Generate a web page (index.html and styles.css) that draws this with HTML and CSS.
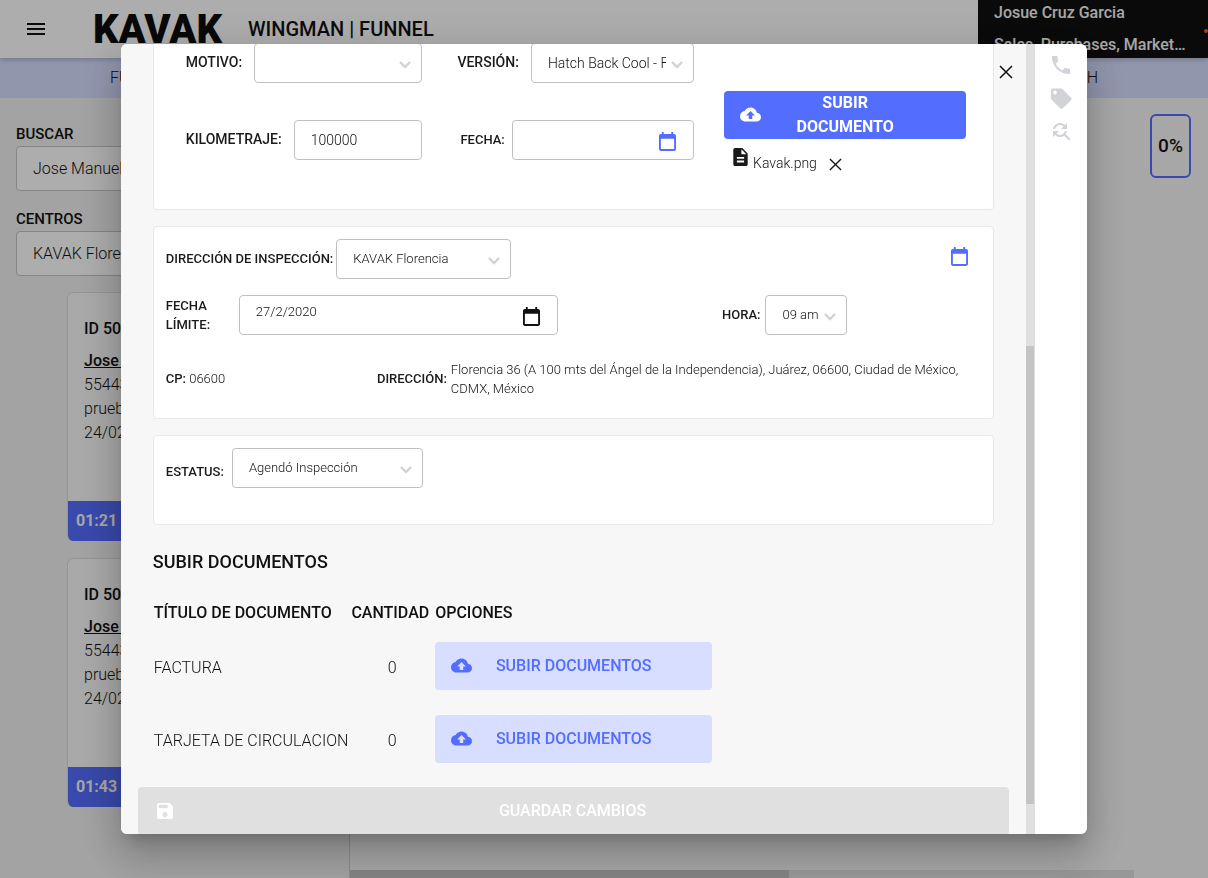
FILE: index.html
```html
<!DOCTYPE html>
<html lang="es">
<head>
<meta charset="utf-8">
<meta name="viewport" content="width=device-width, initial-scale=1">
<title>Wingman | Funnel</title>
<link rel="stylesheet" href="styles.css">
</head>
<body>
<svg class="sprite" aria-hidden="true">
  <symbol id="chevron" viewBox="0 0 12 8"><path d="M1 1l5 5 5-5" fill="none" stroke="currentColor" stroke-width="2.4"/></symbol>
  <symbol id="cross" viewBox="0 0 14 14"><path d="M1 1l12 12M13 1L1 13" fill="none" stroke="currentColor" stroke-width="1.5"/></symbol>
  <symbol id="calendar" viewBox="3 1 18 20"><path d="M19 3h-1V1h-2v2H8V1H6v2H5c-1.11 0-1.99.9-1.99 2L3 19c0 1.1.89 2 2 2h14c1.1 0 2-.9 2-2V5c0-1.1-.9-2-2-2zm0 16H5V8h14v11z" fill="currentColor"/></symbol>
  <symbol id="cloud" viewBox="0 0 24 24"><path d="M19.35 10.04C18.67 6.59 15.64 4 12 4 9.11 4 6.6 5.64 5.35 8.04 2.34 8.36 0 10.91 0 14c0 3.31 2.69 6 6 6h13c2.76 0 5-2.24 5-5 0-2.64-2.05-4.78-4.65-4.96zM14 13v4h-4v-4H7l5-5 5 5h-3z" fill="currentColor"/></symbol>
  <symbol id="file" viewBox="4 2 16 20"><path d="M14 2H6c-1.1 0-1.99.9-1.99 2L4 20c0 1.1.89 2 1.99 2H18c1.1 0 2-.9 2-2V8l-6-6zm2 16H8v-2h8v2zm0-4H8v-2h8v2zm-3-5V3.5L18.5 9H13z" fill="currentColor"/></symbol>
  <symbol id="phone" viewBox="0 0 24 24"><path d="M6.62 10.79c1.44 2.83 3.76 5.14 6.59 6.59l2.2-2.2c.27-.27.67-.36 1.02-.24 1.12.37 2.33.57 3.57.57.55 0 1 .45 1 1V20c0 .55-.45 1-1 1-9.39 0-17-7.61-17-17 0-.55.45-1 1-1h3.5c.55 0 1 .45 1 1 0 1.25.2 2.45.57 3.57.11.35.03.74-.25 1.02l-2.2 2.2z" fill="currentColor"/></symbol>
  <symbol id="tag" viewBox="0 0 24 24"><path d="M21.9 11.6l-8.6-8.6c-.4-.4-.9-.6-1.4-.6H4c-1.1 0-2.1.9-2.1 2v7.8c0 .5.2 1 .6 1.4l8.6 8.6c.8.8 2 .8 2.8 0l8-8c.8-.8.8-1.9 0-2.6zM6 8.4a1.9 1.9 0 1 1 0-3.8 1.9 1.9 0 0 1 0 3.8z" fill="currentColor"/></symbol>
  <symbol id="find" viewBox="0 0 24 24"><path d="M11 6c1.38 0 2.63.56 3.54 1.46L12 10h6V4l-2.05 2.05C14.68 4.78 12.93 4 11 4c-3.53 0-6.43 2.61-6.92 6H6.1c.46-2.28 2.48-4 4.9-4zm5.64 9.14c.66-.9 1.12-1.97 1.28-3.14H15.9c-.46 2.28-2.48 4-4.9 4-1.38 0-2.63-.56-3.54-1.46L10 12H4v6l2.05-2.05C7.32 17.22 9.07 18 11 18c1.55 0 2.98-.51 4.14-1.36L20 21.49 21.49 20l-4.85-4.86z" fill="currentColor"/></symbol>
  <symbol id="save" viewBox="3 3 18 18"><path d="M17 3H5c-1.11 0-2 .9-2 2v14c0 1.1.89 2 2 2h14c1.1 0 2-.9 2-2V7l-4-4zm-5 16c-1.66 0-3-1.34-3-3s1.34-3 3-3 3 1.34 3 3-1.34 3-3 3zm3-10H5V5h10v4z" fill="currentColor"/></symbol>
</svg>

<div class="page">
  <header class="topbar">
    <button class="menu" type="button" aria-label="Menú"><span></span><span></span><span></span></button>
    <svg class="logo" width="130" height="44" role="img" aria-label="Kavak"><text x="0" y="31">KAVAK</text></svg>
    <h1 class="brand">WINGMAN | FUNNEL</h1>
    <div class="user"><span>Josue Cruz Garcia</span><span>Sales, Purchases, Market…</span><i class="dot"></i></div>
  </header>
  <nav class="tabs"><a href="#funnel">FUNNEL</a><a href="#search">SEARCH</a></nav>
  <div class="columns">
    <aside class="sidebar">
      <label class="side-label" for="buscar">BUSCAR</label>
      <input class="side-input" id="buscar" type="text" value="Jose Manuel">
      <label class="side-label" for="centros">CENTROS</label>
      <select class="side-input" id="centros"><option>KAVAK Florencia</option></select>
      <article class="lead">
        <div class="lead-body"><strong class="lead-id">ID 50</strong><a href="#lead1">Jose M</a><span>55443</span><span>prueba</span><span>24/02</span></div>
        <div class="lead-time">01:21</div>
      </article>
      <article class="lead">
        <div class="lead-body"><strong class="lead-id">ID 50</strong><a href="#lead2">Jose M</a><span>55443</span><span>prueba</span><span>24/02</span></div>
        <div class="lead-time">01:43</div>
      </article>
    </aside>
    <main class="board">
      <div class="percent">0%</div>
      <div class="hbar"><div class="hbar-thumb"></div></div>
    </main>
  </div>
</div>

<div class="backdrop">
  <section class="modal" role="dialog" aria-label="Inspección">
    <div class="pane">
      <div class="card car">
        <div class="car-fields">
          <div class="field"><label for="motivo">MOTIVO:</label><span class="pick"><select id="motivo"><option></option></select><svg class="chev"><use href="#chevron"/></svg></span></div>
          <div class="field"><label for="version">VERSIÓN:</label><span class="pick version"><select id="version"><option>Hatch Back Cool - Full</option></select><svg class="chev"><use href="#chevron"/></svg></span></div>
          <div class="field"><label for="km">KILOMETRAJE:</label><span class="pick"><input id="km" type="text" value="100000"></span></div>
          <div class="field date-field"><label for="fecha">FECHA:</label><span class="pick"><input id="fecha" type="text"><svg class="cal"><use href="#calendar"/></svg></span></div>
        </div>
        <div class="upload">
          <button class="btn solid" type="button"><svg class="cloud"><use href="#cloud"/></svg><span>SUBIR DOCUMENTO</span></button>
          <div class="file"><svg class="doc"><use href="#file"/></svg><span>Kavak.png</span><button class="remove" type="button" aria-label="Quitar"><svg><use href="#cross"/></svg></button></div>
        </div>
      </div>

      <div class="card inspection">
        <div class="place">
          <label for="lugar">DIRECCIÓN DE INSPECCIÓN:</label>
          <span class="pick"><select id="lugar"><option>KAVAK Florencia</option></select><svg class="chev"><use href="#chevron"/></svg></span>
          <button class="cal-btn" type="button" aria-label="Calendario"><svg class="cal-icon"><use href="#calendar"/></svg></button>
        </div>
        <div class="when">
          <label for="limite">FECHA LÍMITE:</label>
          <span class="pick limit"><input id="limite" type="text" value="27/2/2020"><svg class="cal dark"><use href="#calendar"/></svg></span>
          <div class="hour"><label for="hora">HORA:</label><span class="pick"><select id="hora"><option>09 am</option></select><svg class="chev"><use href="#chevron"/></svg></span></div>
        </div>
        <div class="address">
          <div><b>CP:</b> 06600</div>
          <div class="street"><b>DIRECCIÓN:</b><span>Florencia 36 (A 100 mts del Ángel de la Independencia), Juárez, 06600, Ciudad de México, CDMX, México</span></div>
        </div>
      </div>

      <div class="card status">
        <label for="estatus">ESTATUS:</label>
        <span class="pick"><select id="estatus"><option>Agendó Inspección</option></select><svg class="chev"><use href="#chevron"/></svg></span>
      </div>

      <h2 class="docs-title">SUBIR DOCUMENTOS</h2>
      <table class="docs">
        <thead><tr><th>TÍTULO DE DOCUMENTO</th><th>CANTIDAD</th><th>OPCIONES</th></tr></thead>
        <tbody>
          <tr><td>FACTURA</td><td class="num">0</td><td class="action"><button class="btn soft" type="button"><svg class="cloud"><use href="#cloud"/></svg><span>SUBIR DOCUMENTOS</span></button></td></tr>
          <tr><td>TARJETA DE CIRCULACION</td><td class="num">0</td><td class="action"><button class="btn soft" type="button"><svg class="cloud"><use href="#cloud"/></svg><span>SUBIR DOCUMENTOS</span></button></td></tr>
        </tbody>
      </table>
      <button class="btn save" type="button" disabled><svg class="disk"><use href="#save"/></svg><span>GUARDAR CAMBIOS</span></button>
      <button class="close" type="button" aria-label="Cerrar"><svg><use href="#cross"/></svg></button>
    </div>
    <div class="vbar"><div class="vbar-thumb"></div></div>
    <div class="tools">
      <button type="button" aria-label="Llamar"><svg><use href="#phone"/></svg></button>
      <button type="button" aria-label="Etiqueta"><svg><use href="#tag"/></svg></button>
      <button type="button" aria-label="Reasignar"><svg><use href="#find"/></svg></button>
    </div>
  </section>
</div>
</body>
</html>
```

FILE: styles.css
```css
* { box-sizing: border-box; }
body {
  margin: 0;
  font: 300 16px/24px Roboto, "Liberation Sans", sans-serif;
  color: #111;
  overflow: hidden;
}
button, input, select { font: inherit; color: inherit; margin: 0; }
button { border: 0; padding: 0; background: none; cursor: pointer; }
svg { display: block; }
.sprite { position: absolute; width: 0; height: 0; }

.page { display: flex; flex-direction: column; height: 100vh; background: #f7f7f7; }
.topbar {
  display: flex;
  align-items: center;
  flex: none;
  height: 58px;
  padding-left: 27px;
  background: #fff;
  box-shadow: 0 2px 5px rgba(0, 0, 0, .2);
  z-index: 1;
}
.menu { display: grid; gap: 3px; width: 18px; }
.menu span { height: 2px; background: #111; }
.logo { margin-left: 48px; overflow: visible; align-self: flex-start; margin-top: 12px; }
.logo text { font: 900 40px Roboto, "Liberation Sans", sans-serif; fill: #0c0c0c; }
.brand { margin: 0 0 0 25px; font-size: 20px; font-weight: 500; color: #111; }
.user {
  position: relative;
  display: flex;
  flex-direction: column;
  justify-content: center;
  gap: 8px;
  width: 230px;
  height: 58px;
  margin-left: auto;
  padding-left: 16px;
  background: #0f0f0f;
  color: #f7f7f7;
  font-weight: 500;
  white-space: nowrap;
}
.dot { position: absolute; right: 0; top: 29px; width: 4px; height: 4px; border-radius: 2px; background: #ff5722; }
.tabs {
  display: flex;
  justify-content: space-between;
  align-items: center;
  flex: none;
  height: 40px;
  padding: 0 110px;
  background: #d8deff;
}
.tabs a { color: #111; text-decoration: none; }
.columns { display: flex; flex: 1; min-height: 0; }
.sidebar {
  display: flex;
  flex-direction: column;
  width: 350px;
  padding: 24px 16px 0;
  border-right: 1px solid #d0d0d0;
  background: #f0f0f0;
}
.side-label { font-size: 15px; font-weight: 500; }
.side-input {
  appearance: none;
  flex: none;
  width: 100%;
  height: 45px;
  margin-bottom: 16px;
  padding: 0 16px;
  border: 1px solid #c4c4c4;
  border-radius: 4px;
  background: #fff;
}
.lead {
  display: flex;
  flex-direction: column;
  flex: none;
  height: 249px;
  margin: 0 0 17px 51px;
  border: 1px solid #dcdcdc;
  border-bottom: 0;
  border-radius: 6px;
  background: #fafafa;
  overflow: hidden;
}
.lead-body { display: flex; flex-direction: column; flex: 1; padding: 24px 16px; }
.lead-id { margin-bottom: 8px; font-weight: 500; }
.lead-body a { font-weight: 500; color: #111; }
.lead-time { padding: 8px; background: #536dfe; color: #f7f7f7; font-weight: 700; }
.board { display: flex; flex-direction: column; justify-content: space-between; flex: 1; padding-top: 16px; }
.percent {
  align-self: flex-end;
  width: 41px;
  height: 64px;
  margin-right: 17px;
  border: 2px solid #536dfe;
  border-radius: 6px;
  font-size: 19px;
  font-weight: 500;
  line-height: 60px;
  text-align: center;
}
.hbar { height: 8px; margin-right: 74px; background: #e0e0e0; }
.hbar-thumb { width: 56%; height: 8px; background: #c4c4c4; }

.backdrop {
  position: fixed;
  inset: 0;
  z-index: 2;
  display: flex;
  align-items: center;
  justify-content: center;
  background: rgba(0, 0, 0, .32);
}
.modal {
  display: flex;
  width: 80%;
  height: 90%;
  border-radius: 6px;
  background: #fff;
  overflow: hidden;
  box-shadow: 0 11px 15px -7px rgba(0, 0, 0, .2), 0 24px 38px 3px rgba(0, 0, 0, .14), 0 9px 46px 8px rgba(0, 0, 0, .12);
}
.pane { position: relative; flex: 1; min-width: 0; padding: 0 32px; background: #f7f7f7; overflow: hidden; }
.vbar { display: flex; flex: none; width: 9px; background: #e0e0e0; border-right: 1px solid #ddd; }
.vbar-thumb { align-self: flex-start; width: 8px; height: 58%; margin-top: 302px; background: #c4c4c4; }
.tools { display: flex; flex-direction: column; align-items: center; gap: 9px; width: 52px; padding-top: 9px; color: #d2d2d9; }
.tools svg { width: 24px; height: 24px; }
.close { position: absolute; top: 21px; right: 13px; color: #111; }
.close svg { width: 14px; height: 14px; }

.card { margin-bottom: 16px; border: 1px solid #e8e8e8; border-radius: 4px; background: #fff; }
.card label, .card b { font-size: 13px; line-height: 19px; font-weight: 500; color: #1a1a1a; }
.pick { position: relative; display: block; }
.pick input, .pick select {
  display: block;
  appearance: none;
  width: 100%;
  height: 40px;
  padding: 0 16px;
  border: 1px solid #c0c0c0;
  border-radius: 4px;
  background: #fff;
  font-size: 13px;
}
.chev { position: absolute; right: 11px; top: 18px; width: 12px; height: 8px; color: #d2d2d9; pointer-events: none; }
.cal { position: absolute; right: 18px; top: 12px; width: 17px; height: 19px; color: #536dfe; }
.dark { color: #111; }

.car { display: flex; gap: 30px; margin-top: -17px; padding: 15px 27px 42px 32px; }
.car-fields { display: grid; flex: 508; grid-template-columns: 1fr 1fr; align-content: start; gap: 37px 35px; }
.field { display: flex; align-items: center; gap: 12px; }
.field .pick { flex: 1; min-width: 0; }
.field input, .field select { font-size: 14px; }
.card .field label { font-size: 14px; }
.version select { padding-right: 27px; }
.date-field { gap: 7px; padding-left: 3px; }
.card .date-field label { font-size: 13px; }
.upload { flex: 242; padding-top: 48px; }
.btn { display: flex; align-items: center; width: 100%; height: 48px; padding: 0 16px; border-radius: 4px; font-weight: 500; text-align: center; }
.btn span { flex: 1; padding-right: 21px; }
.btn svg { flex: none; width: 21px; height: 21px; }
.solid { background: #536dfe; color: #fff; font-weight: 700; }
.solid span { padding: 0 50px 0 29px; }
.file { display: flex; gap: 5px; padding: 9px 0 0 9px; height: 28px; font-size: 14px; line-height: 30px; }
.doc { width: 15px; height: 18px; color: #1a1a1a; }
.remove { width: 13px; height: 34px; margin-left: 7px; color: #1a1a1a; }
.remove svg { width: 13px; height: 13px; }

.inspection { display: flex; flex-direction: column; gap: 16px; padding: 12px 12px 20px; font-size: 13px; line-height: 19px; }
.place { display: flex; align-items: center; gap: 3px; }
.place .pick { flex: 0 1 175px; }
.cal-btn { margin: -4px 13px 0 auto; color: #536dfe; }
.cal-icon { width: 17px; height: 19px; }
.when { display: grid; grid-template-columns: 73fr 319fr 164fr 259fr; align-items: center; }
.when > label { width: 50px; }
.limit input { padding-bottom: 7px; }
.hour { grid-column: 4; display: flex; align-items: center; gap: 5px; }
.hour .pick { width: 82px; }
.address { display: grid; grid-template-columns: 211fr 604fr; align-items: center; padding-top: 9px; }
.street { display: flex; align-items: center; gap: 4px; }
.status { display: flex; align-items: center; gap: 8px; padding: 12px 12px 36px; }
.status label { padding-top: 7px; }
.status .pick { width: 191px; }

.docs-title { margin: 25px 0 27px; font-size: 18px; line-height: 24px; font-weight: 500; }
.docs { border-collapse: collapse; }
.docs th { padding: 0 6px 16px 0; font-weight: 500; text-align: left; }
.docs th:first-child, .docs td:first-child { padding-left: 1px; padding-right: 3px; }
.docs td { height: 73px; padding: 6px 0 24px; }
.docs .action { padding: 1px 0 24px; }
.docs .num { padding-right: 2px; text-align: center; }
.soft { width: 277px; background: #d8deff; color: #536dfe; }
.save { width: calc(100% + 30px); margin: 0 -15px; padding-left: 19px; background: #e0e0e0; color: #fff; }
.save .disk { width: 16px; height: 16px; }
```
